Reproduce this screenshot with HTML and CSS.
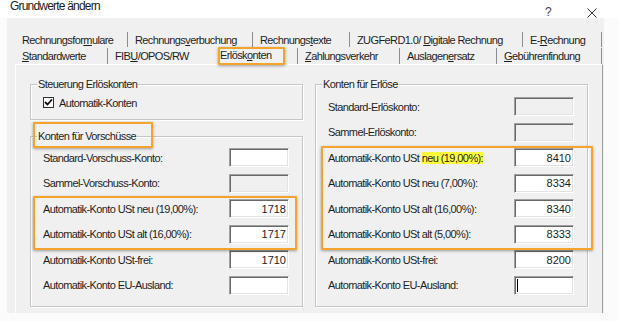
FILE: index.html
```html
<!DOCTYPE html>
<html lang="de">

<head>
  <meta charset="UTF-8">
  <title>Grundwerte ändern</title>
  <link rel="stylesheet" href="styles.css">
</head>

<body>
  <div class="screen">
    <!-- Title bar -->
    <div class="titlebar">
      <span class="title">Grundwerte ändern</span>
      <span class="help">?</span>
      <svg class="close" width="10" height="10" viewBox="0 0 10 10">
        <path d="M0.5 0.5L9.5 9.5M9.5 0.5L0.5 9.5" stroke="#333" stroke-width="1" />
      </svg>
    </div>

    <div class="dialog">
      <!-- Tabs -->
      <div class="tab-row top">
        <div class="tab first">Rechnungsfor<u>m</u>ulare</div>
        <div class="tab">Rechnungs<u>v</u>erbuchung</div>
        <div class="tab">Rechnungs<u>t</u>exte</div>
        <div class="tab">ZUGFeRD1.0/ <u>D</u>igitale Rechnung</div>
        <div class="tab">E-<u>R</u>echnung</div>
      </div>
      <div class="tab-row bottom">
        <div class="tab first"><u>S</u>tandardwerte</div>
        <div class="tab plain">FIB<u>U</u>/OPOS/RW</div>
        <div class="tab active">Erlösk<u>o</u>nten</div>
        <div class="tab"><u>Z</u>ahlungsverkehr</div>
        <div class="tab">Auslagen<u>e</u>rsatz</div>
        <div class="tab"><u>G</u>ebührenfindung</div>
      </div>

      <!-- Tab page -->
      <div class="panel">
        <div class="column">
          <fieldset class="group control">
            <legend>Steuerung Erlöskonten</legend>
            <div class="check">
              <span class="box">
                <svg width="9" height="9" viewBox="0 0 9 9">
                  <path d="M1 4L3.5 6.5L8 1.5" fill="none" stroke="#111" stroke-width="1.8" />
                </svg>
              </span>
              Automatik-Konten
            </div>
          </fieldset>

          <fieldset class="group advances">
            <legend>Konten für Vorschüsse</legend>
            <div class="rows">
              <div class="row"><span>Standard-Vorschuss-Konto:</span><span class="field"></span></div>
              <div class="row"><span>Sammel-Vorschuss-Konto:</span><span class="field disabled"></span></div>
              <div class="row"><span>Automatik-Konto USt neu (19,00%):</span><span class="field">1718</span></div>
              <div class="row"><span>Automatik-Konto USt alt (16,00%):</span><span class="field">1717</span></div>
              <div class="row"><span>Automatik-Konto USt-frei:</span><span class="field">1710</span></div>
              <div class="row"><span>Automatik-Konto EU-Ausland:</span><span class="field"></span></div>
            </div>
          </fieldset>
        </div>

        <div class="column">
          <fieldset class="group revenue">
            <legend>Konten für Erlöse</legend>
            <div class="rows">
              <div class="row"><span>Standard-Erlöskonto:</span><span class="field disabled"></span></div>
              <div class="row"><span>Sammel-Erlöskonto:</span><span class="field disabled"></span></div>
              <div class="row"><span>Automatik-Konto USt <span class="hl">neu (19,00%):</span></span><span class="field">8410</span></div>
              <div class="row"><span>Automatik-Konto USt neu (7,00%):</span><span class="field">8334</span></div>
              <div class="row"><span>Automatik-Konto USt alt (16,00%):</span><span class="field">8340</span></div>
              <div class="row"><span>Automatik-Konto USt alt (5,00%):</span><span class="field">8333</span></div>
              <div class="row"><span>Automatik-Konto USt-frei:</span><span class="field">8200</span></div>
              <div class="row"><span>Automatik-Konto EU-Ausland:</span><span class="field start"><span class="caret"></span></span></div>
            </div>
          </fieldset>
        </div>
      </div>
    </div>

    <!-- Orange annotation frames -->
    <div class="mark mark-tab"></div>
    <div class="mark mark-legend"></div>
    <div class="mark mark-left"></div>
    <div class="mark mark-right"></div>
  </div>
</body>

</html>
```

FILE: styles.css
```css
* {
  margin: 0;
  padding: 0;
  box-sizing: border-box;
}

body {
  background-color: #fbfbfb;
  font-family: 'Liberation Sans', Arial, sans-serif;
  font-size: 11px;
  letter-spacing: -0.6px;
  color: #1e1e1e;
}

.screen {
  position: relative;
  width: 619px;
  height: 321px;
  overflow: hidden;
}

/* Title bar */
.titlebar {
  display: flex;
  align-items: flex-start;
  height: 18px;
  padding-left: 10px;
  background-color: #fff;
}

.title {
  font-size: 12px;
  line-height: 12px;
  letter-spacing: -0.8px;
  color: #222;
}

.help {
  margin-left: auto;
  margin-top: 6px;
  font-size: 12px;
  line-height: 12px;
  color: #444;
}

.close {
  margin: 8px 22px 0 36px;
}

/* Dialog */
.dialog {
  margin-left: 7px;
  width: 597px;
  height: 295px;
  padding: 13px 0 0 8px;
  background-color: #f0f0f0;
}

.tab-row {
  display: grid;
  margin-left: 2px;
}

.tab-row.top {
  height: 16px;
  grid-template-columns: 111px 125px 97px 173px 79px;
}

.tab-row.bottom {
  height: 17px;
  grid-template-columns: 91px 102px 88px 102px 97px 105px;
}

.tab {
  padding: 2px 0 0 7px;
  line-height: 13px;
  white-space: nowrap;
  border-right: 1px solid #8c8c8c;
  margin-top: 1px;
}

.tab.first {
  padding-left: 5px;
}

.tab.plain {
  border-right: none;
}

.tab.active {
  padding: 1px 0 0 10px;
}

/* Tab page */
.panel {
  display: flex;
  gap: 12px;
  width: 588px;
  height: 249px;
  padding: 12px 0 0 14px;
  border-top: 1px solid #fff;
  border-left: 1px solid #fff;
  border-right: 1px solid #a0a0a0;
}

.column {
  display: flex;
  flex-direction: column;
  width: 273px;
}

.group {
  border: 1px solid #c6c6c6;
  box-shadow: inset 1px 1px 0 #fff, 1px 1px 0 #fff;
  padding: 0 0 0 6px;
}

.group legend {
  padding: 0 1px;
  line-height: 14px;
  background-color: #f0f0f0;
}

.control {
  padding-bottom: 10px;
}

.check {
  display: flex;
  align-items: center;
  gap: 5px;
  height: 13px;
  margin: 5px 0 0 6px;
}

.check .box {
  display: flex;
  justify-content: center;
  align-items: center;
  width: 11px;
  height: 11px;
  border: 1px solid #333;
  background-color: #fff;
}

.advances {
  margin-top: 9px;
  padding-bottom: 11px;
}

.revenue {
  padding-bottom: 11px;
}

.rows {
  display: grid;
  grid-auto-rows: 19px;
  row-gap: 6.57px;
  padding: 6px 13px 0 6px;
}

.advances .rows {
  padding-top: 5px;
}

.row {
  display: flex;
  justify-content: space-between;
  align-items: center;
  white-space: nowrap;
}

.hl {
  background-color: #ffff3c;
}

.field {
  display: flex;
  justify-content: flex-end;
  align-items: center;
  width: 60px;
  height: 19px;
  padding-right: 2px;
  background-color: #fff;
  border: 1px solid;
  border-color: #a0a0a0 #fff #fff #a0a0a0;
  box-shadow: inset 1px 1px 0 #696969, inset -1px -1px 0 #e3e3e3;
  letter-spacing: 0;
}

.field.disabled {
  background-color: #f0f0f0;
}

.field.start {
  justify-content: flex-start;
  padding-left: 2px;
}

.caret {
  width: 1px;
  height: 13px;
  background-color: #000;
}

/* Orange annotation frames */
.mark {
  position: absolute;
  border: 2px solid #f4a42a;
  border-radius: 1px;
  box-shadow: 0 1px 3px rgba(0, 0, 0, 0.35);
}

.mark-tab {
  left: 218px;
  top: 47px;
  width: 67px;
  height: 18px;
}

.mark-legend {
  left: 33px;
  top: 122px;
  width: 120px;
  height: 26px;
}

.mark-left {
  left: 33px;
  top: 196px;
  width: 264px;
  height: 54px;
}

.mark-right {
  left: 321px;
  top: 146px;
  width: 272px;
  height: 104px;
}
```
